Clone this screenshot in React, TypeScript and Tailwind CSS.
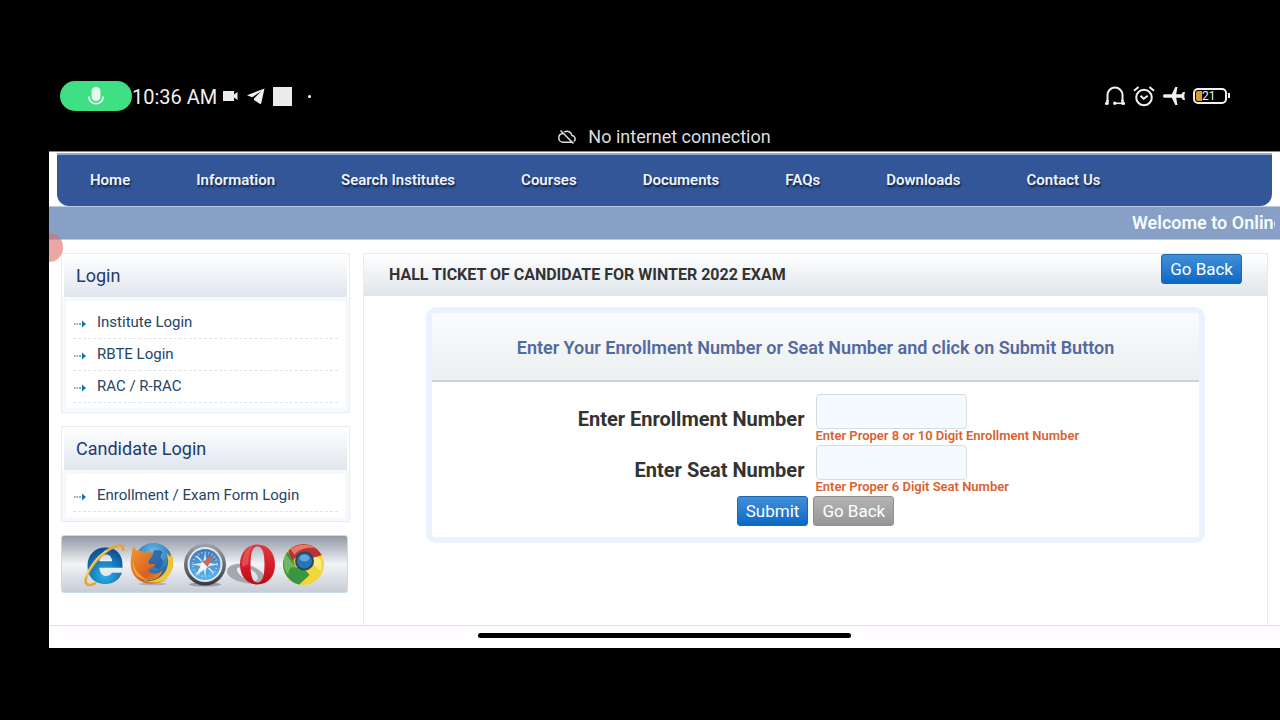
import { useState } from 'react';
import type { ReactNode } from 'react';

const navItems = ['Home', 'Information', 'Search Institutes', 'Courses', 'Documents', 'FAQs', 'Downloads', 'Contact Us'];
const loginLinks = ['Institute Login', 'RBTE Login', 'RAC / R-RAC'];
const candidateLinks = ['Enrollment / Exam Form Login'];

const blueButton = 'h-[30px] rounded-[3px] border border-[#1f66ad] bg-linear-to-b from-[#3f8fd8] to-[#0968c6] px-2 text-[17px] leading-7 text-white';
const grayButton = 'h-[30px] rounded-[3px] border border-[#8f8f8f] bg-linear-to-b from-[#b4b4b4] to-[#969696] px-2 text-[17px] leading-7 text-white';

function StatusBar() {
    return (
        <div className="flex h-8 items-center pl-[11px] pr-[53px] text-[#f1f1f1]">
            <div className="flex h-[30px] w-[72px] items-center justify-center rounded-full bg-[#3fdf84]">
                <svg className="h-5 w-5" viewBox="0 0 20 20" fill="none">
                    <rect x="5.500" y="1" width="9" height="14" rx="4.500" fill="#e9f7ee" />
                    <path d="M2.800 10.500a7.200 7.200 0 0 0 14.400 0" stroke="#e9f7ee" strokeWidth="1.800" />
                </svg>
            </div>
            <span className="pt-0.5 text-[20px] leading-8">10:36 AM</span>
            <svg className="ml-1.5 h-3 w-4" viewBox="0 0 16 12" fill="#ececec">
                <path d="M0 1h11v3.500L14.500 2v8L11 7.500V11H0z" />
            </svg>
            <svg className="ml-2 h-[18px] w-[18px]" viewBox="0 0 18 18" fill="#f1f1f1">
                <path d="M17.500 1.500 0 8.200l5.200 2L14.200 4.300 7 11.400v1.500l5.700 3.800c.7.400 1.400.2 1.600-.7z" />
            </svg>
            <div className="ml-2 h-[19px] w-[19px] bg-[#ececec]" />
            <div className="ml-4 h-[3px] w-[3px] rounded-full bg-white" />
            <div className="ml-auto flex items-center">
                <svg className="h-5 w-5" viewBox="0 0 20 20" fill="none" stroke="#f1f1f1" strokeWidth="2">
                    <path d="M2.500 15V9a7.500 7.500 0 0 1 15 0v6" />
                    <path d="M9.500 17.300H18" strokeWidth="1.600" />
                    <path d="M0 17.500h3M17 17.500h3" strokeWidth="2.500" />
                    <path d="M2.500 14v4.500M17.500 14v4.500" strokeWidth="2.600" />
                    <circle cx="9.800" cy="17.300" r="1.700" fill="#f1f1f1" stroke="none" />
                </svg>
                <svg className="ml-2 h-[22px] w-[22px]" viewBox="0 0 22 22" fill="none" stroke="#f1f1f1" strokeWidth="2">
                    <circle cx="11" cy="12.500" r="7.800" />
                    <path d="M1 5.800 5.600 2M21 5.800 16.400 2M7.500 10.800l3.200 3 4-3" />
                </svg>
                <svg className="ml-2 h-[22px] w-[22px]" viewBox="0 0 22 22" fill="#f1f1f1">
                    <path d="M0 11c0-1 .8-1.700 1.700-1.700h7.100L12.300 2h2.200l-1.300 7.300h5.200L20 7h2l-.8 4 .8 4h-2l-1.600-2.300h-5.200l1.300 7.300h-2.200l-3.500-7.300H1.700C.8 12.700 0 12 0 11z" />
                </svg>
                <div className="relative ml-2 flex h-4 w-[34px] items-center rounded-[5px] border-2 border-[#f1f1f1] pl-px">
                    <div className="h-[10px] w-[6px] rounded-l-[2px] bg-[#dd9a2e]" />
                    <span className="text-[12px] leading-3">21</span>
                    <div className="absolute top-[3px] -right-[5px] h-[5px] w-[2px] bg-[#f1f1f1]" />
                </div>
            </div>
        </div>
    );
}

function CloudOff() {
    return (
        <svg className="h-4 w-[18px]" viewBox="0 0 18 16" fill="none" stroke="#dedede" strokeWidth="1.500">
            <path d="M5 4.500C2.500 4.600.8 6.500.8 8.900c0 2.500 1.900 4.300 4.300 4.300h8.700M6.300 3c3.300-1.800 7-.1 7.600 3.500 3.300.2 4.300 4.200 1.900 6M2.500 1.500l13 13" />
        </svg>
    );
}

function DottedArrow() {
    return (
        <svg className="mt-0.5 h-2 w-3" viewBox="0 0 12 8">
            <path d="M0 4h1.500M2.500 4H4M5 4h2M8 4h1" stroke="#5c95b8" strokeWidth="1.500" />
            <path d="M8 .5 12 4 8 7.500z" fill="#1674ad" />
        </svg>
    );
}

function Panel({ title, links }: { title: string; links: string[] }) {
    return (
        <section className="border border-[#e6edf3] bg-white">
            <h2 className="h-[43px] border-x-2 border-white bg-linear-to-b from-white to-[#dfe6ed] pl-3 text-[18px] leading-[43px] text-[#213a70]">
                {title}
            </h2>
            <ul className="border-4 border-[#f5f9fd] px-[7px] pt-1.5 pb-[5px]">
                {links.map((link) => (
                    <li key={link} className="h-8 border-b border-dashed border-[#dfe3e8]">
                        <a href="#" className="flex items-center gap-[11px] pl-px text-[15px] leading-[31px] text-[#264466]">
                            <DottedArrow />
                            {link}
                        </a>
                    </li>
                ))}
            </ul>
        </section>
    );
}

function BrowserLogos() {
    return (
        <svg className="h-full w-full" viewBox="0 0 284 56">
            <defs>
                <radialGradient id="ie" cx="50%" cy="75%" r="75%">
                    <stop offset="0" stopColor="#27b5f0" />
                    <stop offset="1" stopColor="#0c4b8c" />
                </radialGradient>
                <radialGradient id="globe" cx="50%" cy="25%" r="70%">
                    <stop offset="0" stopColor="#68c5ec" />
                    <stop offset="1" stopColor="#174a91" />
                </radialGradient>
                <linearGradient id="fox" x1="0" y1="0" x2="1" y2="1">
                    <stop offset="0" stopColor="#ef9a31" />
                    <stop offset=".6" stopColor="#d9601f" />
                    <stop offset="1" stopColor="#eeb02b" />
                </linearGradient>
                <linearGradient id="metal" x1="0" y1="0" x2="0" y2="1">
                    <stop offset="0" stopColor="#9fa5ab" />
                    <stop offset="1" stopColor="#35393f" />
                </linearGradient>
                <linearGradient id="dial" x1="0" y1="0" x2="0" y2="1">
                    <stop offset="0" stopColor="#4278bd" />
                    <stop offset="1" stopColor="#57b6ef" />
                </linearGradient>
                <linearGradient id="opera" x1="0" y1="0" x2="0" y2="1">
                    <stop offset="0" stopColor="#e5373d" />
                    <stop offset="1" stopColor="#c00818" />
                </linearGradient>
                <clipPath id="chromeDisc">
                    <circle cx="241" cy="28.500" r="20.500" />
                </clipPath>
            </defs>

            {/* Internet Explorer */}
            <g>
                <path d="M60 32.500H37c.5 5 3 7.500 6.600 7.500 3 0 4.800-1.200 5.800-3.200h10C57 44 51 48 43 48c-11 0-18-7-18-18s7-18.500 18-18.500S61 18.500 60 32.500zM37 24.500h12.500c-.5-4-2.800-6-6-6s-5.900 2-6.500 6z" fill="url(#ie)" fillRule="evenodd" />
                <path d="M37 24.500h12.500M37 32.500h23" stroke="#e3f3fc" strokeWidth="1.500" />
                <path d="M60.500 15c1.500-5-2-7-9-4C40 15.500 27 31 23.500 42c-1.500 7 2.500 9 10 5" fill="none" stroke="#e6a930" strokeWidth="2.600" />
                <path d="M23.500 41c3-10 11-20 21-27" fill="none" stroke="#f9d976" strokeWidth="1.200" />
            </g>

            {/* Firefox */}
            <g>
                <ellipse cx="90" cy="48" rx="14" ry="1.500" fill="#747b84" opacity=".4" />
                <circle cx="91" cy="26.500" r="19.500" fill="url(#globe)" />
                <path d="M91 15c3-2 7-1 9 1l-2 5 3 5-4 7-7-2-5-4 3-5z" fill="#225e9f" opacity=".8" />
                <path d="M108 15c5 10 3 24-8 30-7 4-15 3-20-1 8 2 15 0 20-5 6-6 7-14 4-22l4 4z" fill="#f0c634" />
                <path d="M71 10c1 2 2 4 4 5 3-1 6 0 8 2 3-1 6-1 8 0-1 3-2.500 5-5 6.500-.5 2 0 3.500 1.500 4.500h5.500c-1 3-4 4-8 5.500 3 5 10 5 15 1-2 8-10 11-19 9 6 4 17 4 25-2-6 6-18 9-27 4C68 40 67 28 69 20c.2-4 .8-7 2-10z" fill="url(#fox)" />
                <path d="M70.500 24c1 10 6 16 15 20-11-1-17-9-15-20z" fill="#f6a442" />
            </g>

            {/* Safari */}
            <g>
                <ellipse cx="142.500" cy="48.500" rx="16" ry="2" fill="#5f666e" opacity=".5" />
                <circle cx="142.500" cy="28.500" r="21" fill="url(#metal)" />
                <circle cx="142.500" cy="28.500" r="17.500" fill="#e4e8ed" />
                <circle cx="142.500" cy="28.500" r="15.500" fill="url(#dial)" />
                <circle cx="142.500" cy="28.500" r="12" fill="none" stroke="#a4cdf0" strokeWidth="2" strokeDasharray="1 2.500" />
                <path d="m142.500 16 1.500 9 3 2 9 1.500-9 1.500-3 2-1.500 9-1.500-9-3-2-9-1.500 9-1.500 3-2z" fill="#d6eafa" />
                <path d="m134 20 5 5M151 37l-5-5" stroke="#d6eafa" strokeWidth="1.500" />
                <path d="m152 18-7 13-5-5z" fill="#cf654f" />
                <path d="m133 40 7-14 5 5z" fill="#f3f6fa" />
            </g>

            {/* Opera */}
            <g>
                <path d="M165 33c5-9 26-6 35 4 5 6 1 11-7 11-13 0-32-6-28-15zm10-1c-3 4 6 13 18 13 6-2 0-11-9-13-4-1-7-1-9 0z" fill="#a4a9ad" fillRule="evenodd" />
                <path d="M195 8.500C205.500 8.500 212.500 17 212.500 28.500S205.500 48.500 195 48.500 177.500 40 177.500 28.500 184.500 8.500 195 8.500zm0 2C190 10.500 188 17 188 28.500S190 46.500 195 46.500 202 40 202 28.500 200 10.500 195 10.500z" fill="url(#opera)" fillRule="evenodd" />
                <path d="M181 20c2-6 6-9 10-10-4 4-5 9-5 18l-6 3c-1-4 0-8 1-11z" fill="#ef7474" opacity=".5" />
            </g>

            {/* Chrome */}
            <g clipPath="url(#chromeDisc)">
                <path d="M220 8h42v41h-42z" fill="#f2d738" />
                <path d="M224 14c-8 10-6 30 9 38l14-13-5-6-9-2-3-10z" fill="#3a9440" />
                <path d="M225 13c8-8 26-9 35 6l-10 3-16-1-4 4z" fill="#bd3036" />
                <path d="M228 13c7-5 18-6 25-1-9-1-17 1-21 7z" fill="#e6786c" />
                <path d="M223 18c-3 7-2 15 3 21 0-7 3-9 8-7z" fill="#6fb85d" />
                <path d="M250 22c7-3 11 4 8 13-4-4-8-6-8-13z" fill="#faeb88" />
                <circle cx="242" cy="25" r="9.500" fill="#254864" />
                <circle cx="242" cy="25" r="7.500" fill="#2873b3" />
                <ellipse cx="242" cy="22" rx="5" ry="3.500" fill="#65a5d9" />
            </g>
        </svg>
    );
}

function Field({ id, label, hint, value, onChange }: { id: string; label: string; hint: string; value: string; onChange: (value: string) => void }) {
    return (
        <div className="grid grid-cols-2 items-center">
            <label htmlFor={id} className="pr-[11px] pb-0.5 text-right text-[20px] font-bold text-[#333333]">
                {label}
            </label>
            <div>
                <input
                    id={id}
                    type="text"
                    value={value}
                    onChange={(e) => onChange(e.target.value)}
                    className="block h-[35px] w-[151px] rounded-[4px] border border-[#d3dde6] bg-[#f5faff] px-2 text-base"
                />
                <p className="pb-0.5 text-[13px] leading-[14px] font-semibold text-[#d9622f]">{hint}</p>
            </div>
        </div>
    );
}

function Card({ title, children }: { title: string; children: ReactNode }) {
    return (
        <div className="mx-[62px] mt-[11px] rounded-[10px] border-[6px] border-[#eaf2fd] bg-white">
            <h2 className="h-[69px] rounded-t-[5px] border-b-2 border-[#cfd1d4] bg-linear-to-b from-[#fbfcff] to-[#ebefef] text-center text-[18px] leading-[70px] font-semibold text-[#526a9d]">
                {title}
            </h2>
            {children}
        </div>
    );
}

export default function App() {
    const [enrollment, setEnrollment] = useState('');
    const [seat, setSeat] = useState('');

    return (
        <div className="min-h-screen bg-black pt-20 pl-[49px] font-['Roboto','Liberation_Sans',sans-serif]">
            <StatusBar />
            <div className="flex h-[39px] items-center justify-center gap-3 pt-2.5 text-[#dedede]">
                <CloudOff />
                <span className="text-[18px]">No internet connection</span>
            </div>

            <div className="relative overflow-hidden border-t border-[#8a8a8a] bg-white">
                <nav className="mt-px mr-2 ml-2 flex h-[53px] items-center gap-[66px] rounded-b-[12px] border-t-2 border-[#9aabc9] bg-[#325697] pl-[33px]">
                    {navItems.map((item) => (
                        <a key={item} href="#" className="text-[15px] font-semibold whitespace-nowrap text-[#eef4ff] text-shadow-[1px_2px_2px_#10203f]">
                            {item}
                        </a>
                    ))}
                </nav>
                <div className="flex h-[34px] justify-end border-y border-[#b9cbe4] bg-[#889fc6] pr-[5px]">
                    <p className="w-[143px] overflow-hidden text-[18px] leading-8 font-semibold whitespace-nowrap text-[#f3fbff]">Welcome to Online</p>
                </div>
                <div className="absolute top-[81px] -left-[14px] h-[29px] w-7 rounded-full bg-[#e06c66] opacity-60" />

                <div className="flex gap-[13px] pt-[13px] pr-3 pl-3">
                    <aside className="flex w-[289px] shrink-0 flex-col gap-[13px]">
                        <Panel title="Login" links={loginLinks} />
                        <Panel title="Candidate Login" links={candidateLinks} />
                        <div className="mr-0.5 h-[58px] rounded-[3px] border border-[#c5dfe8] bg-linear-to-b from-[#9299a5] via-[#f2f4f6] to-[#c6cdd6]">
                            <BrowserLogos />
                        </div>
                    </aside>
                    <main className="min-h-[372px] flex-1 border border-b-0 border-[#e6ebf2]">
                        <div className="flex h-[42px] items-start justify-between bg-linear-to-b from-white to-[#dfe6ec] pr-[25px] pl-[25px]">
                            <h1 className="text-[16px] leading-[42px] font-bold text-[#333333]">HALL TICKET OF CANDIDATE FOR WINTER 2022 EXAM</h1>
                            <button type="button" className={blueButton}>Go Back</button>
                        </div>
                        <Card title="Enter Your Enrollment Number or Seat Number and click on Submit Button">
                            <form className="pt-3 pb-[11px]" onSubmit={(e) => e.preventDefault()}>
                                <Field
                                    id="enrollment"
                                    label="Enter Enrollment Number"
                                    hint="Enter Proper 8 or 10 Digit Enrollment Number"
                                    value={enrollment}
                                    onChange={setEnrollment}
                                />
                                <Field
                                    id="seat"
                                    label="Enter Seat Number"
                                    hint="Enter Proper 6 Digit Seat Number"
                                    value={seat}
                                    onChange={setSeat}
                                />
                                <div className="flex justify-center gap-[5px]">
                                    <button type="submit" className={blueButton}>Submit</button>
                                    <button type="button" className={grayButton}>Go Back</button>
                                </div>
                            </form>
                        </Card>
                    </main>
                </div>

                {/* Gesture bar */}
                <div className="flex h-[23px] justify-center border-t border-[#dfdfe8] bg-[#fffdff] pt-[7px]">
                    <div className="h-[5px] w-[373px] rounded-full bg-black" />
                </div>
            </div>
        </div>
    );
}
